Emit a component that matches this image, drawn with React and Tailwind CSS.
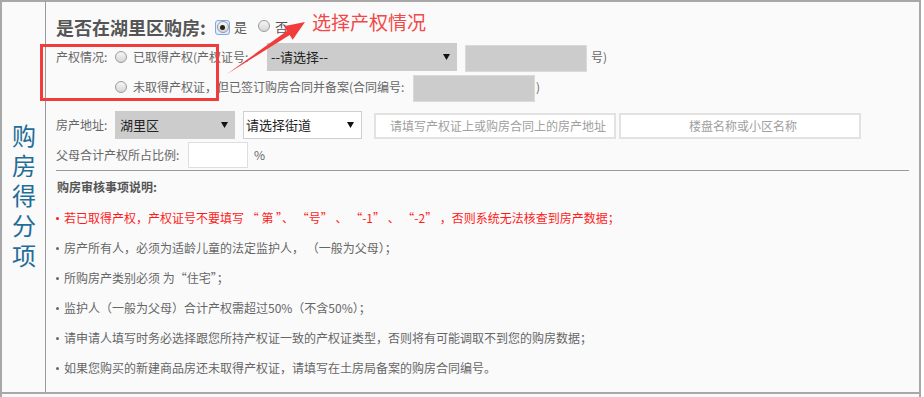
import React from "react";

function Radio({ checked }) {
  return (
    <span className="inline-flex items-center justify-center w-[12px] h-[12px] rounded-full border border-[#9a9a9a] bg-linear-to-b from-[#f6f6f6] to-[#d6d6d6] shrink-0">
      {checked && <span className="block w-[5px] h-[5px] rounded-full bg-[#222]" />}
    </span>
  );
}

function Arrow() {
  return (
    <svg width="7" height="6" viewBox="0 0 7 6" className="shrink-0">
      <polygon points="0,0 7,0 3.5,6" fill="#111" />
    </svg>
  );
}

const notes = [
  "房产所有人，必须为适龄儿童的法定监护人， （一般为父母）；",
  "所购房产类别必须 为“住宅”；",
  "监护人（一般为父母）合计产权需超过50%（不含50%）；",
  "请申请人填写时务必选择跟您所持产权证一致的产权证类型，否则将有可能调取不到您的购房数据；",
  "如果您购买的新建商品房还未取得产权证，请填写在土房局备案的购房合同编号。",
];

export default function App() {
  return (
    <div className="relative w-[924px] h-[397px] bg-white overflow-hidden font-['Noto_Sans_CJK_SC',sans-serif]">
      <div className="w-[921px] h-[397px] border-l-2 border-r-2 border-t-2 border-[#a8a8a8] bg-[#fafafa] flex flex-col">
        <div className="flex border-b-2 border-[#a8a8a8]">
          <div className="w-[44px] shrink-0 border-r border-[#9a9a9a] flex items-center justify-center pt-[4px]">
            <div className="[writing-mode:vertical-rl] text-[24px] leading-[30px] tracking-[6px] text-[#1f6d98]">
              购房得分项
            </div>
          </div>
          <div className="flex-1 pt-[10px] pb-[9px] text-[12px] text-[#666]">
            <div className="pl-[10px] h-[30px] flex items-center">
              <span className="w-[159px] text-[18px] font-bold text-[#555] whitespace-nowrap">是否在湖里区购房:</span>
              <span className="w-[15px] h-[15px] rounded-[3px] border border-[#7fa9e3] bg-[#dfeafa] flex items-center justify-center">
                <Radio checked />
              </span>
              <span className="ml-[4px] text-[13px] text-[#555]">是</span>
              <span className="ml-[11px]"><Radio /></span>
              <span className="ml-[5px] text-[13px] text-[#555]">否</span>
            </div>
            <div className="pl-[10px] h-[30px] flex items-center">
              <span className="w-[59px] whitespace-nowrap">产权情况:</span>
              <Radio />
              <span className="ml-[6px] w-[134px] whitespace-nowrap">已取得产权(产权证号:</span>
              <div className="w-[190px] h-[28px] bg-[#cccccc] flex items-center justify-between pl-[4px] pr-[7px] text-[13px] text-[#222]">
                <span>--请选择--</span>
                <Arrow />
              </div>
              <div className="ml-[8px] w-[122px] h-[27px] mt-[3px] bg-[#cccccc] border border-[#dadada]" />
              <span className="ml-[4px]">号)</span>
            </div>
            <div className="pl-[10px] h-[30px] flex items-center">
              <span className="w-[59px]" />
              <Radio />
              <span className="ml-[6px] w-[280px] whitespace-nowrap">未取得产权证，但已签订购房合同并备案(合同编号:</span>
              <div className="w-[122px] h-[27px] mt-[3px] bg-[#cccccc] border border-[#dadada]" />
              <span className="ml-[1px]">)</span>
            </div>
            <div className="pl-[10px] h-[30px] mt-[8px] flex items-center">
              <span className="w-[59px] whitespace-nowrap">房产地址:</span>
              <div className="w-[120px] h-[28px] bg-[#cccccc] flex items-center justify-between pl-[5px] pr-[7px] text-[13px] text-[#222]">
                <span>湖里区</span>
                <Arrow />
              </div>
              <div className="ml-[8px] w-[119px] h-[28px] bg-white border border-[#cfcfcf] flex items-center justify-between pl-[2px] pr-[7px] text-[13px] text-[#222]">
                <span>请选择街道</span>
                <Arrow />
              </div>
              <div className="ml-[12px] w-[242px] h-[26px] mt-[2px] bg-white border-2 border-[#e2e2e2] flex items-center justify-center pl-[6px] text-[#a0a0a0] whitespace-nowrap">
                请填写产权证上或购房合同上的房产地址
              </div>
              <div className="ml-[3px] w-[242px] h-[26px] mt-[2px] bg-white border-2 border-[#e2e2e2] flex items-center justify-center pl-[6px] text-[#a0a0a0] whitespace-nowrap">
                楼盘名称或小区名称
              </div>
            </div>
            <div className="pl-[10px] h-[30px] flex items-center">
              <span className="w-[132px] whitespace-nowrap">父母合计产权所占比例:</span>
              <div className="w-[60px] h-[26px] bg-white border border-[#dedede]" />
              <span className="ml-[6px]">%</span>
            </div>
            <div className="ml-[10px] mr-[10px] h-px bg-[#9a9a9a]" />
            <div className="pl-[11px] h-[32px] flex items-center font-bold text-[#555]">购房审核事项说明:</div>
            <div className="pl-[10px] h-[30px] flex items-center text-[#ff1a1a] whitespace-nowrap">
              <span className="w-[3px] h-[3px] rounded-full bg-[#ff1a1a] mr-[5px]" />
              若已取得产权，产权证号不要填写 “ 第 ”、 “号” 、 “-1” 、 “-2” ，否则系统无法核查到房产数据；
            </div>
            {notes.map((n) => (
              <div key={n} className="pl-[10px] h-[30px] flex items-center whitespace-nowrap">
                <span className="w-[3px] h-[3px] rounded-full bg-[#666] mr-[5px]" />
                {n}
              </div>
            ))}
          </div>
        </div>
      </div>

      <div className="absolute left-[40px] top-[44px] w-[179px] h-[57px] border-[3px] border-[#f23b3b] pointer-events-none" />
      <div className="absolute left-[312px] top-[8px] text-[19px] leading-[28px] text-[#f24848] whitespace-nowrap">选择产权情况</div>
      <svg className="absolute left-0 top-0 pointer-events-none" width="924" height="397">
        <polygon points="227,74 289.7,35.1 292.7,39.7 305,22 283.9,26.3 286.9,30.9" fill="#f23b3b" />
      </svg>
    </div>
  );
}
